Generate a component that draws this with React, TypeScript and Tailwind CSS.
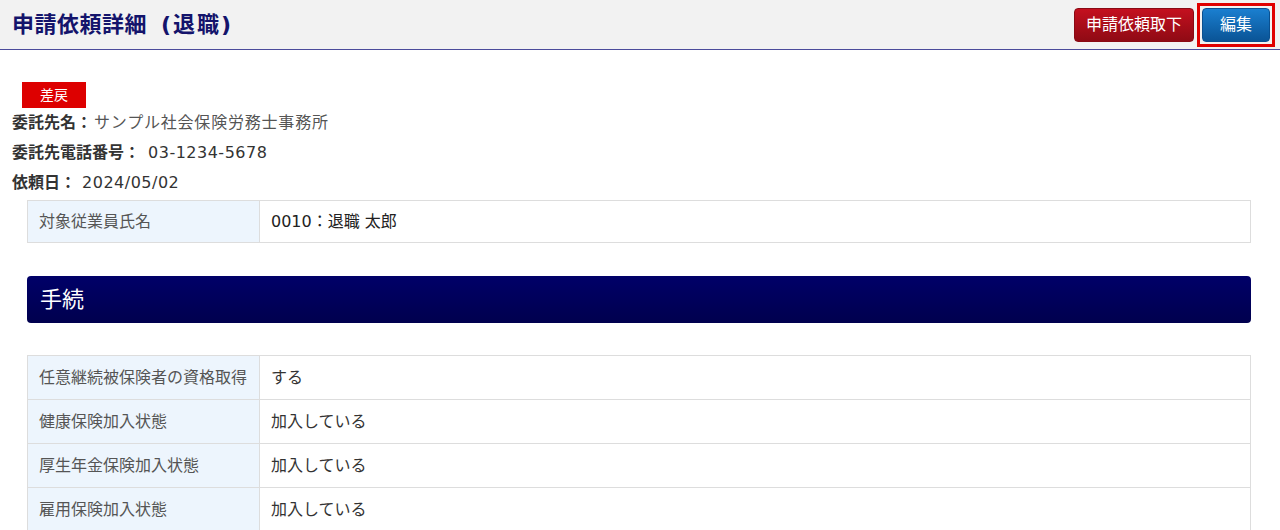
const font = { fontFamily: '"DejaVu Sans", "Noto Sans CJK JP", sans-serif' };

const rows: [string, string][] = [
  ["任意継続被保険者の資格取得", "する"],
  ["健康保険加入状態", "加入している"],
  ["厚生年金保険加入状態", "加入している"],
  ["雇用保険加入状態", "加入している"],
];

const Row = ({ label, value }: { label: string; value: string }) => (
  <div className="flex border-b border-[#dddddd] last:border-b-0">
    <div className="w-[232px] shrink-0 bg-[#edf5fd] border-r border-[#dddddd] px-[11px] h-[43px] flex items-center text-[16px] text-[#555555]">
      {label}
    </div>
    <div className="flex-1 px-[11px] h-[43px] flex items-center text-[16px] text-[#333333]">{value}</div>
  </div>
);

export default function App() {
  return (
    <div className="w-[1280px] h-[530px] overflow-hidden bg-white" style={font}>
      <div className="h-[50px] bg-[#f2f2f2] border-b border-[#4b4b9b] flex items-center justify-between pl-[12px] pr-[5px]">
        <h1 className="text-[22px] font-bold text-[#14146b] tracking-[0.5px]">
          申請依頼詳細<span className="ml-[14px] tracking-[2px]">(退職)</span>
        </h1>
        <div className="flex items-center gap-[3px]">
          <button className="h-[34px] w-[120px] rounded-[4px] text-white text-[16px] bg-gradient-to-b from-[#c4101f] to-[#8f0a14] border border-[#8a0a14]">
            申請依頼取下
          </button>
          <div className="border-[3px] border-[#e00000] p-[2px]">
            <button className="h-[34px] w-[68px] rounded-[4px] text-white text-[16px] bg-gradient-to-b from-[#1a7fd0] to-[#0a5496] border border-[#0a5090]">
              編集
            </button>
          </div>
        </div>
      </div>

      <div className="pl-[12px] pt-[32px]">
        <span className="ml-[10px] inline-flex items-center justify-center w-[64px] h-[26px] bg-[#dd0000] text-white text-[14px]">
          差戻
        </span>
        <div className="mt-[0px] text-[16px] leading-[30px] text-[#333333]">
          <div>
            <span className="font-bold">委託先名：</span>
            <span className="ml-[2px] text-[#555555] tracking-[0.8px]">サンプル社会保険労務士事務所</span>
          </div>
          <div>
            <span className="font-bold">委託先電話番号：</span>
            <span className="ml-[8px] tracking-[0.5px]">03-1234-5678</span>
          </div>
          <div>
            <span className="font-bold">依頼日：</span>
            <span className="ml-[6px] tracking-[0.5px]">2024/05/02</span>
          </div>
        </div>
      </div>

      <div className="ml-[27px] w-[1224px] mt-[2px] border border-[#dddddd]">
        <div className="flex">
          <div className="w-[232px] shrink-0 bg-[#edf5fd] border-r border-[#dddddd] px-[11px] h-[41px] flex items-center text-[16px] text-[#555555]">
            対象従業員氏名
          </div>
          <div className="flex-1 px-[11px] h-[41px] flex items-center text-[16px] text-[#222222]">0010：退職 太郎</div>
        </div>
      </div>

      <div className="ml-[27px] w-[1224px] mt-[33px] h-[47px] rounded-[4px] bg-gradient-to-b from-[#000068] to-[#00004e] flex items-center px-[13px] text-white text-[22px]">
        手続
      </div>

      <div className="ml-[27px] w-[1224px] mt-[32px] border border-[#dddddd]">
        {rows.map(([l, v]) => (
          <Row key={l} label={l} value={v} />
        ))}
      </div>
    </div>
  );
}
